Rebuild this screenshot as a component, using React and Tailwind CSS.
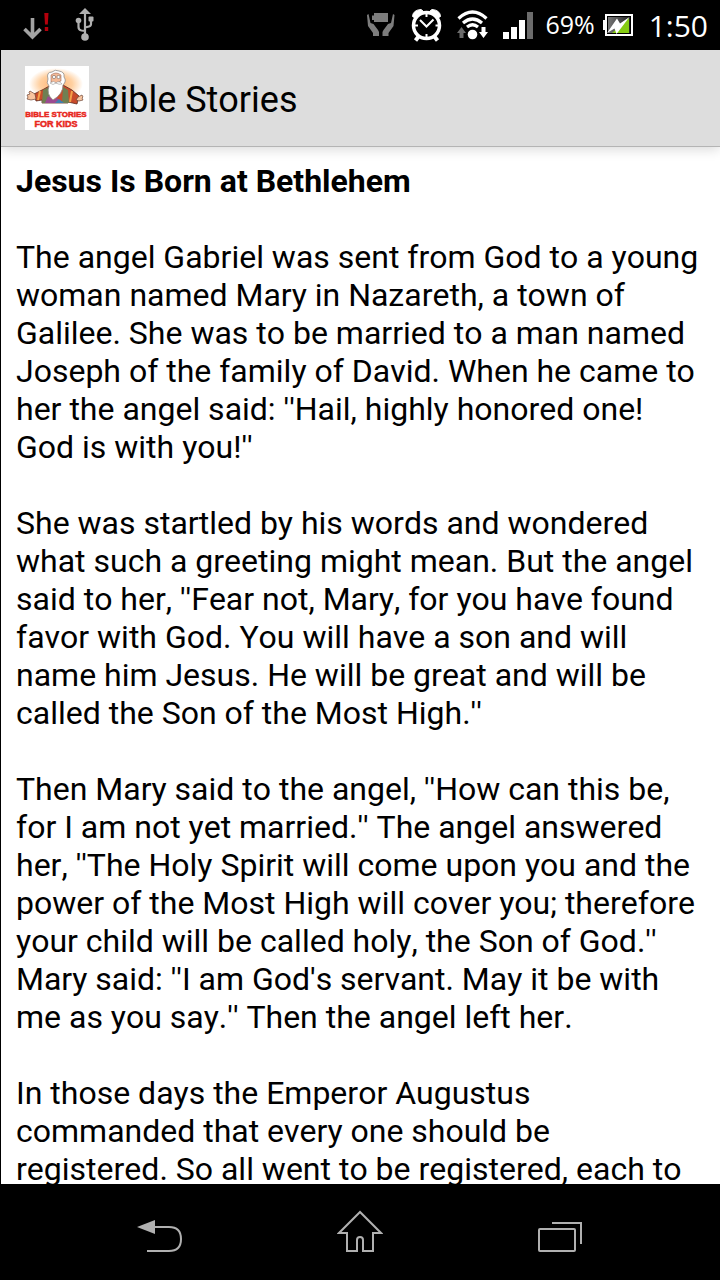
const paragraphs = [
  "The angel Gabriel was sent from God to a young woman named Mary in Nazareth, a town of Galilee. She was to be married to a man named Joseph of the family of David. When he came to her the angel said: ''Hail, highly honored one! God is with you!''",
  "She was startled by his words and wondered what such a greeting might mean. But the angel said to her, ''Fear not, Mary, for you have found favor with God. You will have a son and will name him Jesus. He will be great and will be called the Son of the Most High.''",
  "Then Mary said to the angel, ''How can this be, for I am not yet married.'' The angel answered her, ''The Holy Spirit will come upon you and the power of the Most High will cover you; therefore your child will be called holy, the Son of God.'' Mary said: ''I am God's servant. May it be with me as you say.'' Then the angel left her.",
  "In those days the Emperor Augustus commanded that every one should be registered. So all went to be registered, each to his own town.",
];

function DownloadIcon() {
  return (
    <svg width="28" height="30" viewBox="0 0 28 30" fill="none" aria-hidden="true">
      <path d="M9.500 8v19M1.500 19l8 8 8-8" stroke="#a3a3a3" strokeWidth="3.600" />
      <path d="M21.300 3h4.200l-.7 11.500h-2.800zM21.800 17h3.400v4h-3.400z" fill="#b3000c" />
    </svg>
  );
}

function UsbIcon() {
  return (
    <svg width="20" height="34" viewBox="0 0 20 34" fill="none" aria-hidden="true">
      <path d="M10 4v25M3.500 12v7q0 3 3 3.500l3.500 .5M16 11v5q0 2-2 2.500l-4 1" stroke="#b0b0b0" strokeWidth="2.200" />
      <path d="M10 0l6 6H4z" fill="#b0b0b0" />
      <circle cx="3.500" cy="12.500" r="2.800" fill="#b0b0b0" />
      <rect x="13.500" y="8.500" width="5" height="5" rx="1" fill="#b0b0b0" />
      <circle cx="10" cy="29" r="3.800" fill="#b0b0b0" />
    </svg>
  );
}

function HandsIcon() {
  return (
    <svg width="28" height="24" viewBox="0 0 28 24" fill="#7d7d7d" aria-hidden="true">
      <path d="M7 0h14v9H7V7H5V2.500h2z" />
      <path d="M0 2l1.500-1L3.500 10l3 1 4.500 6 1 2v4H6v-3L1 13z" />
      <path d="M27.500 2L26 1l-2 9-3 1-4.500 6-1 2v4h6v-3l5-7z" />
    </svg>
  );
}

function AlarmIcon() {
  return (
    <svg width="32" height="34" viewBox="0 0 32 34" fill="none" stroke="#fff" aria-hidden="true">
      <circle cx="15.500" cy="17.500" r="13" strokeWidth="3.500" />
      <path d="M8 28l-3.500 4.500M23 28l3.500 4.500" strokeWidth="4" />
      <path d="M1.500 8.500Q2 2 10 1.500L12 3 4 10zM29.500 8.500Q29 2 21 1.500L19 3l8 7z" fill="#fff" strokeWidth="1" />
      <path d="M9 12l6.500 6.500 7-7" strokeWidth="2" />
      <path d="M15.500 5v4M15.500 26v4M3.500 17.500h3.500M24.500 17.500h3.500" strokeWidth="2" />
    </svg>
  );
}

function WifiIcon() {
  return (
    <svg width="32" height="30" viewBox="0 0 32 30" fill="none" aria-hidden="true">
      <path d="M1.500 8.500q14-13 28 0M6 13q9.500-8 19 0M10 17q5.500-4.500 11 0" stroke="#fff" strokeWidth="3.200" />
      <circle cx="15.500" cy="24.500" r="4.800" fill="#fff" />
      <path d="M4.500 17l4.500 6H6.500v5h-4v-5H0z" fill="#6b6b6b" />
      <path d="M24.500 17h4v5H31l-4.500 6-4.500-6h2.500z" fill="#fff" />
    </svg>
  );
}

function SignalIcon() {
  return (
    <svg width="30" height="27" viewBox="0 0 30 27" fill="#fff" aria-hidden="true">
      <path d="M0 20h6v7H0zM8 15h6v12H8zM16 8h6v19h-6z" />
      <path d="M24 0h6v27h-6z" fill="#6b6b6b" />
    </svg>
  );
}

function BatteryIcon() {
  return (
    <svg width="30" height="23" viewBox="0 0 30 23" aria-hidden="true">
      <defs>
        <linearGradient id="charge" x1="0" x2="1" y1="0" y2="0">
          <stop offset="0" stopColor="#777" />
          <stop offset="1" stopColor="#222" />
        </linearGradient>
      </defs>
      <path d="M0 6h3v10H0z" fill="#fff" />
      <rect x="3" y="1" width="26" height="20" fill="#000" stroke="#fff" strokeWidth="2" />
      <rect x="5" y="3" width="22" height="16" fill="url(#charge)" />
      <path d="M26 4v15H9z" fill="#86cc12" />
      <path d="M26.500 3L13.500 20l-2-5.500L4 19 14 4.500l3 5z" fill="#fff" />
    </svg>
  );
}

function AppLogo() {
  return (
    <svg width="64" height="64" viewBox="0 0 64 64" role="img" aria-label="Bible Stories for Kids" className="shrink-0">
      <defs>
        <radialGradient id="glow">
          <stop offset="0" stopColor="#ffb070" />
          <stop offset=".6" stopColor="#ffd0a0" />
          <stop offset="1" stopColor="#fff" />
        </radialGradient>
      </defs>
      <path fill="#fff" d="M0 0h64v64H0z" />
      <ellipse cx="31" cy="18" rx="27" ry="16" fill="url(#glow)" />
      <path d="M9 28l10-5 7-4h12l9 5 7 6-2 8-9-2v1H17v-3l-6 1z" fill="#c94b2b" stroke="#5d2b1e" strokeWidth=".8" />
      <path d="M18 24l6-3 2 16h-9zM38 21l5 3 1 13h-7z" fill="#6f7f52" />
      <path d="M15 25l-2 9M47 25l-2 11" stroke="#f4a14a" strokeWidth="2" />
      <path d="M10 28l-5-3q-2 1 0 3l-3 1 1 2-1 2 4 1 5-1zM53 31l4-2 1 2-1 1 1 2-4 1-3-1z" fill="#f8c5a0" stroke="#6b4435" strokeWidth=".7" />
      <path d="M20 37l3-7 5 4 4-2 6 5z" fill="#9a4a91" />
      <path d="M30 37l4-4 5 4z" fill="#3f7fb0" />
      <path d="M23 13q-2-7 4-7 3-3 7-1 6 1 5 6 3 4-1 8 0 9-10 15-7-6-4-14-3-3-1-7z" fill="#fff" stroke="#8d8d8d" strokeWidth=".8" />
      <path d="M26 9q5-4 10 0v6q-4 3-10 1z" fill="#f4b996" stroke="#8a5546" strokeWidth=".5" />
      <path d="M25 17q4-3 6 0 3-3 6 1-3 1-6-1-3 3-6 0" fill="#fff" stroke="#999" strokeWidth=".6" />
      <circle cx="29" cy="11" r="1.600" fill="#fff" stroke="#555" strokeWidth=".5" />
      <circle cx="33.500" cy="11" r="1.600" fill="#fff" stroke="#555" strokeWidth=".5" />
      <g fill="#e8261c" stroke="#e8261c" strokeWidth=".5" fontFamily="Liberation Sans Narrow, Liberation Sans, sans-serif" fontWeight="700" textAnchor="middle">
        <text x="31" y="51" fontSize="8">BIBLE STORIES</text>
        <text x="31" y="61" fontSize="9">FOR KIDS</text>
      </g>
    </svg>
  );
}

export default function App() {
  return (
    <div className="flex h-screen flex-col bg-black font-[Roboto,sans-serif] text-black [font-kerning:none]">
      <div className="flex h-[50px] shrink-0 items-center justify-between pl-[23px] pr-3 text-white">
        <div className="flex items-center gap-6">
          <DownloadIcon />
          <UsbIcon />
        </div>
        <div className="flex items-center">
          <div className="flex items-center gap-4 pr-3">
            <HandsIcon />
            <div className="flex items-center gap-[14px]">
              <AlarmIcon />
              <WifiIcon />
              <SignalIcon />
            </div>
          </div>
          <span className="pr-2 font-[Open_Sans,sans-serif] text-[25px]">69%</span>
          <BatteryIcon />
          <time className="pl-4 font-[Open_Sans,sans-serif] text-[30px]">1:50</time>
        </div>
      </div>

      <div className="ml-px flex min-h-0 flex-1 flex-col bg-white">
        <header className="z-10 flex h-[97px] shrink-0 items-center gap-2 border-b border-[#b4b4b4] bg-[#dddddd] pl-6 shadow-[0_2px_12px_rgba(0,0,0,0.16)]">
          <AppLogo />
          <h1 className="pt-1 text-4xl">Bible Stories</h1>
        </header>
        <main className="min-h-0 flex-1 overflow-hidden pl-[15px] pr-3 pt-[15px] text-[32px] leading-[38px]">
          <h2 className="mb-[38px] font-bold">Jesus Is Born at Bethlehem</h2>
          {paragraphs.map((text) => (
            <p key={text} className="mb-[38px]">{text}</p>
          ))}
        </main>
      </div>

      <nav className="flex h-24 shrink-0 items-center justify-center gap-[136px]">
        <button aria-label="Back" className="flex h-16 w-16 items-center justify-center">
          <svg width="46" height="48" viewBox="0 0 46 48" fill="none" aria-hidden="true">
            <path d="M17 19h15q12 0 12 12t-12 12H10" stroke="#b0b0b0" strokeWidth="2" />
            <path d="M0 19l18-7v14z" fill="#b0b0b0" />
          </svg>
        </button>
        <button aria-label="Home" className="flex h-16 w-16 items-center justify-center">
          <svg width="46" height="48" viewBox="0 0 46 48" fill="none" aria-hidden="true">
            <path d="M23 4L2 25h8v18h10V32q0-3 3-3t3 3v11h10V25h8z" stroke="#b0b0b0" strokeWidth="2" />
          </svg>
        </button>
        <button aria-label="Recent apps" className="flex h-16 w-16 items-center justify-center">
          <svg width="46" height="48" viewBox="0 0 46 48" fill="none" stroke="#b0b0b0" strokeWidth="2" aria-hidden="true">
            <rect x="2" y="21" width="36" height="22" rx="1" />
            <path d="M15 15h29v21" />
          </svg>
        </button>
      </nav>
    </div>
  );
}
